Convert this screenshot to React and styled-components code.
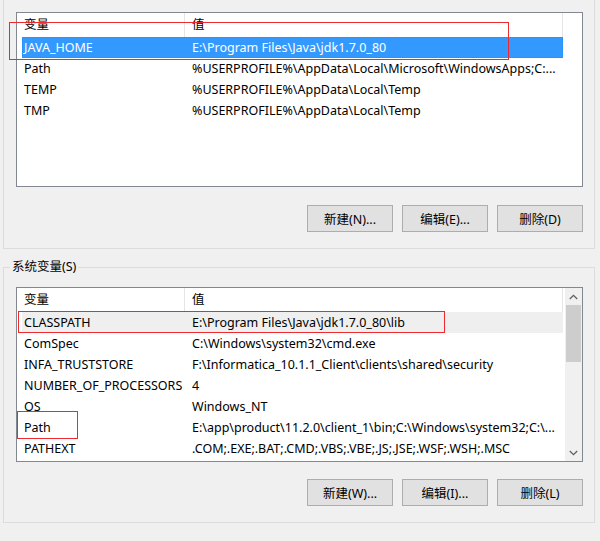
import React from 'react';
import styled, { createGlobalStyle } from 'styled-components';

const GlobalStyle = createGlobalStyle`
  html, body {
    margin: 0;
    padding: 0;
    background: #f0f0f0;
  }
  body {
    font-family: "Noto Sans", "Noto Sans CJK SC", sans-serif;
    font-size: 12px;
    color: #000;
    overflow: hidden;
  }
`;

const Page = styled.div`
  position: relative;
  width: 600px;
  height: 541px;
  overflow: hidden;
  box-sizing: border-box;
  padding: 0 5px 0 3px;
  display: flex;
  flex-direction: column;
  gap: 10px;
`;

const Group = styled.fieldset`
  margin: ${p => (p.$first ? '-15px 0 0' : '0')};
  padding: ${p => p.$padTop}px 11px 16px 12px;
  border: 1px solid #dcdcdc;
  min-width: 0;
  box-sizing: border-box;
`;

const Legend = styled.legend`
  padding: 0 2px;
  margin-left: -6px;
  font-size: 12.5px;
  line-height: 16px;
  color: #000;
`;

const List = styled.div`
  height: 175px;
  box-sizing: border-box;
  border: 1px solid #828790;
  background: #fff;
  display: flex;
  overflow: hidden;
  font-size: 12.5px;
`;

const Table = styled.div`
  flex: 1;
  min-width: 0;
`;

const Header = styled.div`
  display: flex;
  height: 24px;
`;

const HeadCell = styled.div`
  width: ${p => p.$w}px;
  box-sizing: border-box;
  padding-left: 7px;
  border-right: 1px solid #e5e5e5;
  line-height: 24px;
  white-space: nowrap;
`;

const Row = styled.div`
  display: flex;
  height: 21px;
  margin-left: 5px;
  width: 541px;
  box-sizing: border-box;
  background: ${p => (p.$state === 'active' ? '#3399ff' : p.$state === 'idle' ? '#efefef' : 'transparent')};
  color: ${p => (p.$state === 'active' ? '#fff' : '#000')};
  outline: ${p => (p.$state === 'active' ? '1px dotted #cc6600' : 'none')};
  outline-offset: -1px;
`;

const Cell = styled.div`
  width: ${p => p.$w}px;
  box-sizing: border-box;
  padding-left: ${p => p.$pad}px;
  line-height: 21px;
  white-space: nowrap;
  overflow: hidden;
`;

const ScrollBar = styled.div`
  width: 17px;
  background: #f0f0f0;
  display: flex;
  flex-direction: column;
`;

const Arrow = styled.div`
  height: 17px;
  display: flex;
  align-items: center;
  justify-content: center;
`;

const Track = styled.div`
  flex: 1;
  padding: 0 1px;
`;

const Thumb = styled.div`
  height: 57px;
  background: #cdcdcd;
`;

const Buttons = styled.div`
  display: flex;
  justify-content: flex-end;
  gap: 9px;
  margin-top: ${p => p.$top}px;
`;

const Button = styled.button`
  width: 86px;
  height: 27px;
  padding: 0;
  background: #e1e1e1;
  border: 1px solid #adadad;
  font-family: inherit;
  font-size: 12.5px;
  color: #000;
`;

const Mark = styled.div`
  position: absolute;
  left: ${p => p.$x}px;
  top: ${p => p.$y}px;
  width: ${p => p.$w}px;
  height: ${p => p.$h}px;
  box-sizing: border-box;
  border: 1px solid #ee2a2e;
  pointer-events: none;
`;

const userVars = [
  ['JAVA_HOME', 'E:\\Program Files\\Java\\jdk1.7.0_80'],
  ['Path', '%USERPROFILE%\\AppData\\Local\\Microsoft\\WindowsApps;C:...'],
  ['TEMP', '%USERPROFILE%\\AppData\\Local\\Temp'],
  ['TMP', '%USERPROFILE%\\AppData\\Local\\Temp'],
];

const sysVars = [
  ['CLASSPATH', 'E:\\Program Files\\Java\\jdk1.7.0_80\\lib'],
  ['ComSpec', 'C:\\Windows\\system32\\cmd.exe'],
  ['INFA_TRUSTSTORE', 'F:\\Informatica_10.1.1_Client\\clients\\shared\\security'],
  ['NUMBER_OF_PROCESSORS', '4'],
  ['OS', 'Windows_NT'],
  ['Path', 'E:\\app\\product\\11.2.0\\client_1\\bin;C:\\Windows\\system32;C:\\...'],
  ['PATHEXT', '.COM;.EXE;.BAT;.CMD;.VBS;.VBE;.JS;.JSE;.WSF;.WSH;.MSC'],
];

const Chevron = ({ up }) => (
  <svg width="9" height="6" viewBox="0 0 9 6">
    <polyline
      points={up ? '0.8,5 4.5,1.3 8.2,5' : '0.8,1 4.5,4.7 8.2,1'}
      fill="none"
      stroke="#606060"
      strokeWidth="1.3"
    />
  </svg>
);

function VarList({ rows, selected, state, scroll }) {
  return (
    <List>
      <Table>
        <Header>
          <HeadCell $w={168}>变量</HeadCell>
          <HeadCell $w={378}>值</HeadCell>
        </Header>
        {rows.map(([name, value], i) => (
          <Row key={name + i} $state={i === selected ? state : null}>
            <Cell $w={163} $pad={2}>{name}</Cell>
            <Cell $w={378} $pad={7}>{value}</Cell>
          </Row>
        ))}
      </Table>
      {scroll && (
        <ScrollBar>
          <Arrow><Chevron up /></Arrow>
          <Track><Thumb /></Track>
          <Arrow><Chevron /></Arrow>
        </ScrollBar>
      )}
    </List>
  );
}

export default function App() {
  return (
    <>
      <GlobalStyle />
      <Page>
        <Group $first $padTop={11}>
          <Legend>Administrator 的用户变量(U)</Legend>
          <VarList rows={userVars} selected={0} state="active" />
          <Buttons $top={18}>
            <Button>新建(N)...</Button>
            <Button>编辑(E)...</Button>
            <Button>删除(D)</Button>
          </Buttons>
        </Group>
        <Group $padTop={12}>
          <Legend>系统变量(S)</Legend>
          <VarList rows={sysVars} selected={0} state="idle" scroll />
          <Buttons $top={17}>
            <Button>新建(W)...</Button>
            <Button>编辑(I)...</Button>
            <Button>删除(L)</Button>
          </Buttons>
        </Group>
        <Mark $x={9} $y={22} $w={500} $h={38} />
        <Mark $x={18} $y={311} $w={427} $h={22} />
        <Mark $x={17} $y={411} $w={61} $h={28} />
      </Page>
    </>
  );
}
